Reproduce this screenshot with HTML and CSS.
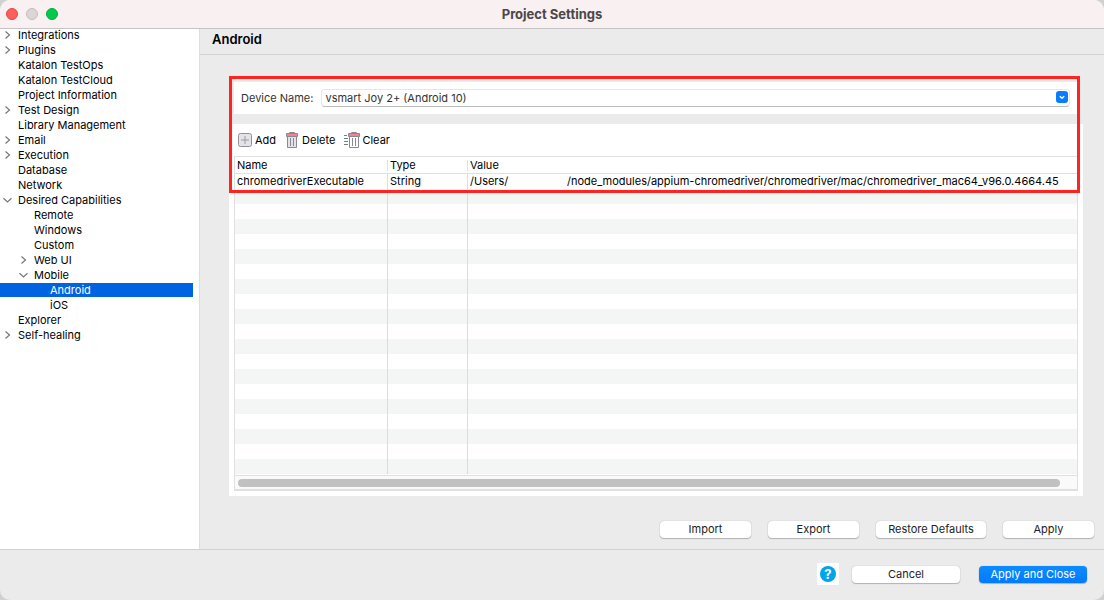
FILE: index.html
```html
<!DOCTYPE html>
<html lang="en">
<head>
<meta charset="utf-8">
<title>Project Settings</title>
<link rel="stylesheet" href="styles.css">
</head>
<body>
<svg class="defs" width="0" height="0" aria-hidden="true">
  <symbol id="right" viewBox="0 0 10 10"><path d="M2.5 1.5 6.5 5 2.5 8.5" fill="none" stroke="#777" stroke-width="1.2"/></symbol>
  <symbol id="down" viewBox="0 0 10 10"><path d="M0.5 3.2 4.5 7 8.5 3.2" fill="none" stroke="#777" stroke-width="1.2"/></symbol>
</svg>
<div class="window">
  <header class="titlebar">
    <div class="lights">
      <button class="light close" aria-label="Close"></button>
      <button class="light minimize" aria-label="Minimize"></button>
      <button class="light expand" aria-label="Zoom"></button>
    </div>
    <h1 class="title">Project Settings</h1>
  </header>

  <div class="body">
    <nav class="sidebar" aria-label="Settings">
      <ul class="tree">
        <li class="item"><svg class="arrow"><use href="#right"/></svg>Integrations</li>
        <li class="item"><svg class="arrow"><use href="#right"/></svg>Plugins</li>
        <li class="item">Katalon TestOps</li>
        <li class="item">Katalon TestCloud</li>
        <li class="item">Project Information</li>
        <li class="item"><svg class="arrow"><use href="#right"/></svg>Test Design</li>
        <li class="item">Library Management</li>
        <li class="item"><svg class="arrow"><use href="#right"/></svg>Email</li>
        <li class="item"><svg class="arrow"><use href="#right"/></svg>Execution</li>
        <li class="item">Database</li>
        <li class="item">Network</li>
        <li class="item"><svg class="arrow"><use href="#down"/></svg>Desired Capabilities</li>
        <li class="item level2">Remote</li>
        <li class="item level2">Windows</li>
        <li class="item level2">Custom</li>
        <li class="item level2"><svg class="arrow"><use href="#right"/></svg>Web UI</li>
        <li class="item level2"><svg class="arrow"><use href="#down"/></svg>Mobile</li>
        <li class="item level3 selected" aria-current="page">Android</li>
        <li class="item level3">iOS</li>
        <li class="item">Explorer</li>
        <li class="item"><svg class="arrow"><use href="#right"/></svg>Self-healing</li>
      </ul>
    </nav>

    <main class="main">
      <h2 class="heading">Android</h2>
      <div class="content">
        <div class="device">
          <label for="device">Device Name:</label>
          <div class="select-wrap">
            <select id="device" class="select"><option>vsmart Joy 2+ (Android 10)</option></select>
            <svg class="select-arrow" viewBox="0 0 12 12"><path d="M3.8 5.2 6 7.2 8.2 5.2" fill="none" stroke="#fff" stroke-width="1.4"/></svg>
          </div>
        </div>
        <div class="panel">
          <div class="toolbar">
            <button class="tool">
              <svg width="16" height="16" viewBox="0 0 16 16"><rect x="1.5" y="1.5" width="13" height="13" rx="2" fill="#e4e4e8" stroke="#8f9299"/><path d="M8 4v8M4 8h8" stroke="#9a9ca3" fill="none"/></svg>Add
            </button>
            <button class="tool delete">
              <svg width="14" height="16" viewBox="0 0 14 16"><path d="M2.5 4.5h9v11h-9z" fill="#e3e3e7" stroke="#858a93"/><path d="M5.5 6v8M8.5 6v8" stroke="#858a93"/><path d="M4.5 1.5v-1h5v1" fill="none" stroke="#858a93"/><path d="M1.5 1.5h11v3h-11z" fill="#ff7d8c" stroke="#858a93"/></svg>Delete
            </button>
            <button class="tool clear">
              <svg width="17" height="16" viewBox="0 0 17 16"><path d="M1 3.5h3M1 6.5h4M1 9.5h4M1 12.5h4" stroke="#777d86"/><path d="M6.5 4.5h9v11h-9z" fill="#fff" stroke="#858a93"/><path d="M9.5 6v8M12.5 6v8" stroke="#858a93"/><path d="M8.5 1.5v-1h5v1" fill="none" stroke="#858a93"/><path d="M5.5 1.5h11v3h-11z" fill="#ff7d8c" stroke="#858a93"/></svg>Clear
            </button>
          </div>
          <div class="grid">
            <table class="table">
              <colgroup><col class="col-name"><col class="col-type"><col></colgroup>
              <thead><tr><th>Name</th><th>Type</th><th>Value</th></tr></thead>
              <tbody>
                <tr><td>chromedriverExecutable</td><td>String</td><td><span class="path-root">/Users/</span>/node_modules/appium-chromedriver/chromedriver/mac/chromedriver_mac64_v96.0.4664.45</td></tr>
                <tr><td></td><td></td><td></td></tr>
                <tr><td></td><td></td><td></td></tr>
                <tr><td></td><td></td><td></td></tr>
                <tr><td></td><td></td><td></td></tr>
                <tr><td></td><td></td><td></td></tr>
                <tr><td></td><td></td><td></td></tr>
                <tr><td></td><td></td><td></td></tr>
                <tr><td></td><td></td><td></td></tr>
                <tr><td></td><td></td><td></td></tr>
                <tr><td></td><td></td><td></td></tr>
                <tr><td></td><td></td><td></td></tr>
                <tr><td></td><td></td><td></td></tr>
                <tr><td></td><td></td><td></td></tr>
                <tr><td></td><td></td><td></td></tr>
                <tr><td></td><td></td><td></td></tr>
                <tr><td></td><td></td><td></td></tr>
                <tr><td></td><td></td><td></td></tr>
                <tr><td></td><td></td><td></td></tr>
                <tr><td></td><td></td><td></td></tr>
              </tbody>
            </table>
            <div class="scroll"><div class="thumb"></div></div>
          </div>
        </div>
        <div class="highlight"></div>
      </div>
      <div class="actions">
        <button class="button">Import</button>
        <button class="button">Export</button>
        <button class="button wide">Restore Defaults</button>
        <button class="button">Apply</button>
      </div>
    </main>
  </div>

  <footer class="footer">
    <button class="help" aria-label="Help"><span class="help-mark">?</span></button>
    <button class="button large">Cancel</button>
    <button class="button large primary">Apply and Close</button>
  </footer>
</div>
</body>
</html>
```

FILE: styles.css
```css
* { box-sizing: border-box; }

body {
  margin: 0;
  background: #d0d0d0;
  color: #000;
  font: 11px/15px Inter, "Liberation Sans", sans-serif;
}

button, select { font: inherit; color: inherit; }

.defs { position: absolute; }

.window {
  display: flex;
  flex-direction: column;
  min-height: 100vh;
  overflow: hidden;
  border-radius: 10px;
  background: #ebebeb;
}

/* Title bar */
.titlebar {
  display: grid;
  grid-template-columns: 1fr auto 1fr;
  align-items: center;
  height: 29px;
  padding: 0 6px;
  border-bottom: 1px solid #c6c3c4;
  background: #f9f0f1;
}

.lights { display: flex; gap: 8px; }

.light {
  width: 12px;
  height: 12px;
  padding: 0;
  border: 1px solid;
  border-radius: 50%;
}

.close { background: #ff5f5c; border-color: #e2463f; }
.minimize { background: #ddd4d6; border-color: #c4bcbe; }
.expand { background: #00c94b; border-color: #00ac39; }

.title {
  margin: 0;
  color: #4b4748;
  font-size: 13px;
  font-weight: 700;
}

.body { display: flex; flex: 1; }

/* Tree */
.sidebar {
  flex: none;
  width: 200px;
  border-right: 1px solid #dedede;
  background: #fff;
}

.tree {
  display: flex;
  flex-direction: column;
  gap: 1px;
  margin: -1px 6px 0 0;
  padding: 0;
  list-style: none;
}

.item {
  position: relative;
  height: 14px;
  padding-left: 18px;
  line-height: 14px;
}

.level2 { padding-left: 34px; }
.level3 { padding-left: 50px; }
.selected { background: #0063e1; color: #fff; }

.arrow {
  position: absolute;
  top: 2px;
  left: 3px;
  width: 10px;
  height: 10px;
}

.level2 .arrow { left: 19px; }

/* Main area */
.main {
  display: flex;
  flex: 1;
  flex-direction: column;
  min-width: 0;
}

.heading {
  height: 26px;
  margin: 0;
  padding: 0 12px;
  border-bottom: 1px solid #d2d2d2;
  font-size: 13px;
  font-weight: 600;
  line-height: 20px;
}

.content {
  position: relative;
  margin: 21px 21px 0 29px;
  padding-top: 6px;
}

.highlight {
  position: absolute;
  top: 0;
  left: 0;
  right: 3px;
  height: 117px;
  border: 3px solid #ff2420;
  pointer-events: none;
}

.device {
  display: flex;
  align-items: center;
  gap: 8px;
  height: 32px;
  margin: 0 6px 10px 5px;
  padding: 0 7px;
  background: #fff;
  color: #333;
}

.select-wrap { position: relative; flex: 1; }

.select {
  display: block;
  width: 100%;
  height: 18px;
  padding: 0 3px;
  border: 1px solid #e6e6e6;
  border-bottom-color: #bcbcbc;
  border-radius: 4px;
  background: #fff;
  appearance: none;
}

.select-arrow {
  position: absolute;
  top: 2px;
  right: 2px;
  width: 12px;
  height: 12px;
  border-radius: 3px;
  background: #0a7cff;
  pointer-events: none;
}

.panel { padding: 0 5px 5px; background: #fff; }

.toolbar {
  display: flex;
  align-items: center;
  height: 32px;
  padding-left: 3px;
}

.tool {
  display: flex;
  align-items: center;
  gap: 2px;
  padding: 0;
  border: 0;
  background: none;
}

.delete { margin-left: 9px; gap: 3px; }
.clear { margin-left: 8px; }

.grid { border: 1px solid #e0e0e0; border-bottom-width: 2px; }

.table {
  width: 100%;
  table-layout: fixed;
  border-collapse: separate;
  border-spacing: 0;
  border-bottom: 1px solid #fff;
}

.col-name { width: 153px; }
.col-type { width: 80px; }

th {
  height: 17px;
  padding: 0 2px;
  border-bottom: 1px solid #e0e0e0;
  background: linear-gradient(#e0e0e0, #e0e0e0) right 3px / 1px 11px no-repeat;
  font-weight: 400;
  line-height: 16px;
  text-align: left;
}

th:last-child { background: none; }

td {
  height: 15px;
  padding: 0 2px;
  border-right: 1px solid #dcdcdc;
  line-height: 15px;
  white-space: nowrap;
}

td:last-child { border-right: 0; }

tbody tr:nth-child(even) { background: #f4f5f5; }

.path-root { display: inline-block; width: 97px; }

.scroll {
  height: 14px;
  padding: 3px 17px 3px 3px;
  border-top: 1px solid #e0e0e0;
  background: #fafafa;
}

.thumb { height: 8px; border-radius: 4px; background: #c1c1c1; }

/* Buttons */
.actions {
  display: flex;
  justify-content: flex-end;
  gap: 17px;
  margin-top: auto;
  padding: 24px 10px 11px;
}

.button {
  width: 91px;
  height: 17px;
  padding: 0;
  border: 0;
  border-radius: 4px;
  background: #fff;
  box-shadow: 0 0 1px 0 #999, 0 1px 1px 0 #b5b5b5;
  color: #222;
  line-height: 17px;
}

.wide { width: 110px; }
.large { width: 108px; }

.footer {
  display: flex;
  align-items: center;
  justify-content: flex-end;
  height: 51px;
  padding: 0 17px 2px;
  border-top: 1px solid #d0d0d0;
}

.primary {
  margin-left: 19px;
  background: linear-gradient(#0e8bff, #007aff);
  color: #fff;
}

.help {
  display: grid;
  place-items: center;
  width: 22px;
  height: 22px;
  margin-right: 13px;
  padding: 0;
  border: 0;
  background: #fff;
}

.help-mark {
  width: 16px;
  height: 16px;
  border-radius: 50%;
  background: #00a4e8;
  color: #fff;
  font-size: 13px;
  font-weight: 700;
  line-height: 16px;
}
```
